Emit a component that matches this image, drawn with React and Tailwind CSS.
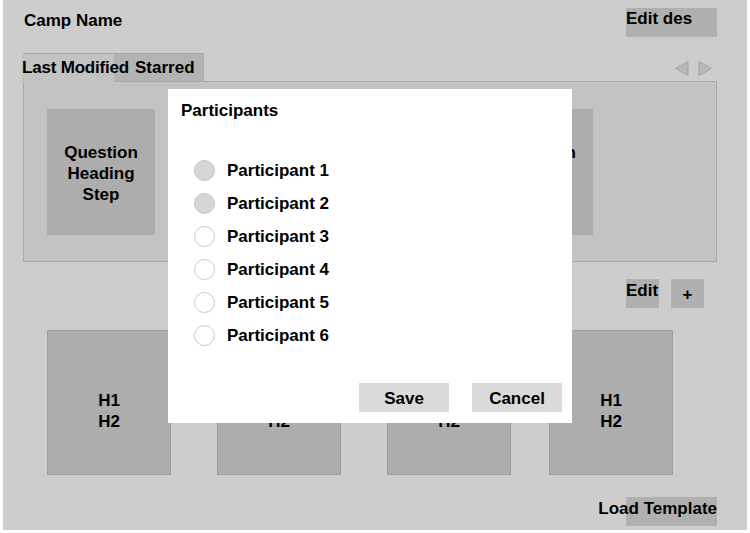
import React from "react";

const font = { fontFamily: '"Liberation Sans", Arial, sans-serif' };

function Arrows() {
  return (
    <div className="flex items-center gap-[9px] mb-[5px] mr-[5px]">
      <svg width="14" height="15" viewBox="0 0 14 15">
        <polygon points="13,0.5 13,14.5 0.8,7.5" fill="#b9b9b9" stroke="#a3a3a3" strokeWidth="1" />
      </svg>
      <svg width="14" height="15" viewBox="0 0 14 15">
        <polygon points="1,0.5 1,14.5 13.2,7.5" fill="#b9b9b9" stroke="#a3a3a3" strokeWidth="1" />
      </svg>
    </div>
  );
}

function StepCard() {
  return (
    <div className="w-[108px] h-[126px] bg-[#adadad] flex items-center justify-center text-center leading-[21px] pt-[3px] shrink-0">
      Question
      <br />
      Heading
      <br />
      Step
    </div>
  );
}

function HeadCard({ className = "" }) {
  return (
    <div
      className={
        "w-[124px] h-[145px] bg-[#adadad] border border-[#9e9e9e] flex items-center justify-center text-center leading-[21px] pt-[17px] shrink-0 " +
        className
      }
    >
      H1
      <br />
      H2
    </div>
  );
}

function Radio({ filled }) {
  return (
    <span
      className={
        "w-[21px] h-[21px] rounded-full border shrink-0 " +
        (filled ? "bg-[#d6d6d6] border-[#c4c4c4]" : "bg-white border-[#c9c9c9]")
      }
    />
  );
}

export default function App() {
  const participants = [1, 2, 3, 4, 5, 6];

  return (
    <div className="w-[750px] h-[533px] bg-white px-[3px] pb-[3px] text-[17px] font-bold text-black" style={font}>
      <div className="relative h-[530px] bg-[#cdcdcd] flex flex-col">
        {/* header */}
        <div className="flex justify-between items-start mt-[8px]">
          <div className="ml-[21px] mt-[3px] leading-[20px]">Camp Name</div>
          <div className="w-[91px] h-[29px] bg-[#b0b0b0] mr-[30px] leading-[22px] whitespace-nowrap">Edit des</div>
        </div>

        {/* tabs */}
        <div className="flex items-end justify-between mt-[16px] ml-[20px] w-[694px]">
          <div className="flex h-[29px] border-t border-l border-[#a8a8a8] relative z-10 -mb-px">
            <div className="w-[92px] bg-[#c3c3c3] relative z-10 leading-[28px] -ml-[2px] whitespace-nowrap tracking-[-0.2px]">Last Modified</div>
            <div className="w-[90px] bg-[#b3b3b3] border-r border-b border-[#a8a8a8] pl-[21px] leading-[28px]">Starred</div>
          </div>
          <Arrows />
        </div>

        {/* step panel */}
        <div className="ml-[20px] w-[694px] h-[181px] bg-[#c3c3c3] border border-[#a8a8a8] flex gap-[38px] pl-[23px] pt-[27px]">
          <StepCard />
          <StepCard />
          <StepCard />
          <StepCard />
        </div>

        {/* edit row */}
        <div className="flex justify-end gap-[12px] mt-[17px] mr-[43px]">
          <div className="w-[33px] h-[29px] bg-[#b0b0b0] leading-[23px]">Edit</div>
          <div className="w-[33px] h-[29px] bg-[#b0b0b0] flex items-center justify-center pt-[2px]">+</div>
        </div>

        {/* head cards */}
        <div className="flex mt-[22px] ml-[44px]">
          <HeadCard />
          <HeadCard className="ml-[46px]" />
          <HeadCard className="ml-[46px]" />
          <HeadCard className="ml-[38px]" />
        </div>

        {/* load template */}
        <div className="flex justify-end mt-[22px] mr-[30px]">
          <div className="w-[91px] h-[29px] bg-[#b0b0b0] flex justify-end">
            <span className="whitespace-nowrap leading-[23px]">Load Template</span>
          </div>
        </div>

        {/* modal */}
        <div className="absolute left-[165px] top-[89px] w-[404px] h-[334px] bg-white flex flex-col">
          <div className="ml-[13px] mt-[12px] leading-[20px]">Participants</div>
          <div className="flex flex-col mt-[33px] ml-[26px]">
            {participants.map((n) => (
              <div key={n} className="flex items-center h-[33px] gap-[12px]">
                <Radio filled={n <= 2} />
                <span>Participant {n}</span>
              </div>
            ))}
          </div>
          <div className="flex justify-end gap-[23px] mt-auto mb-[11px] mr-[10px]">
            <div className="w-[90px] h-[29px] bg-[#dadada] flex items-center justify-center pt-[2px]">Save</div>
            <div className="w-[90px] h-[29px] bg-[#dadada] flex items-center justify-center pt-[2px]">Cancel</div>
          </div>
        </div>
      </div>
    </div>
  );
}
